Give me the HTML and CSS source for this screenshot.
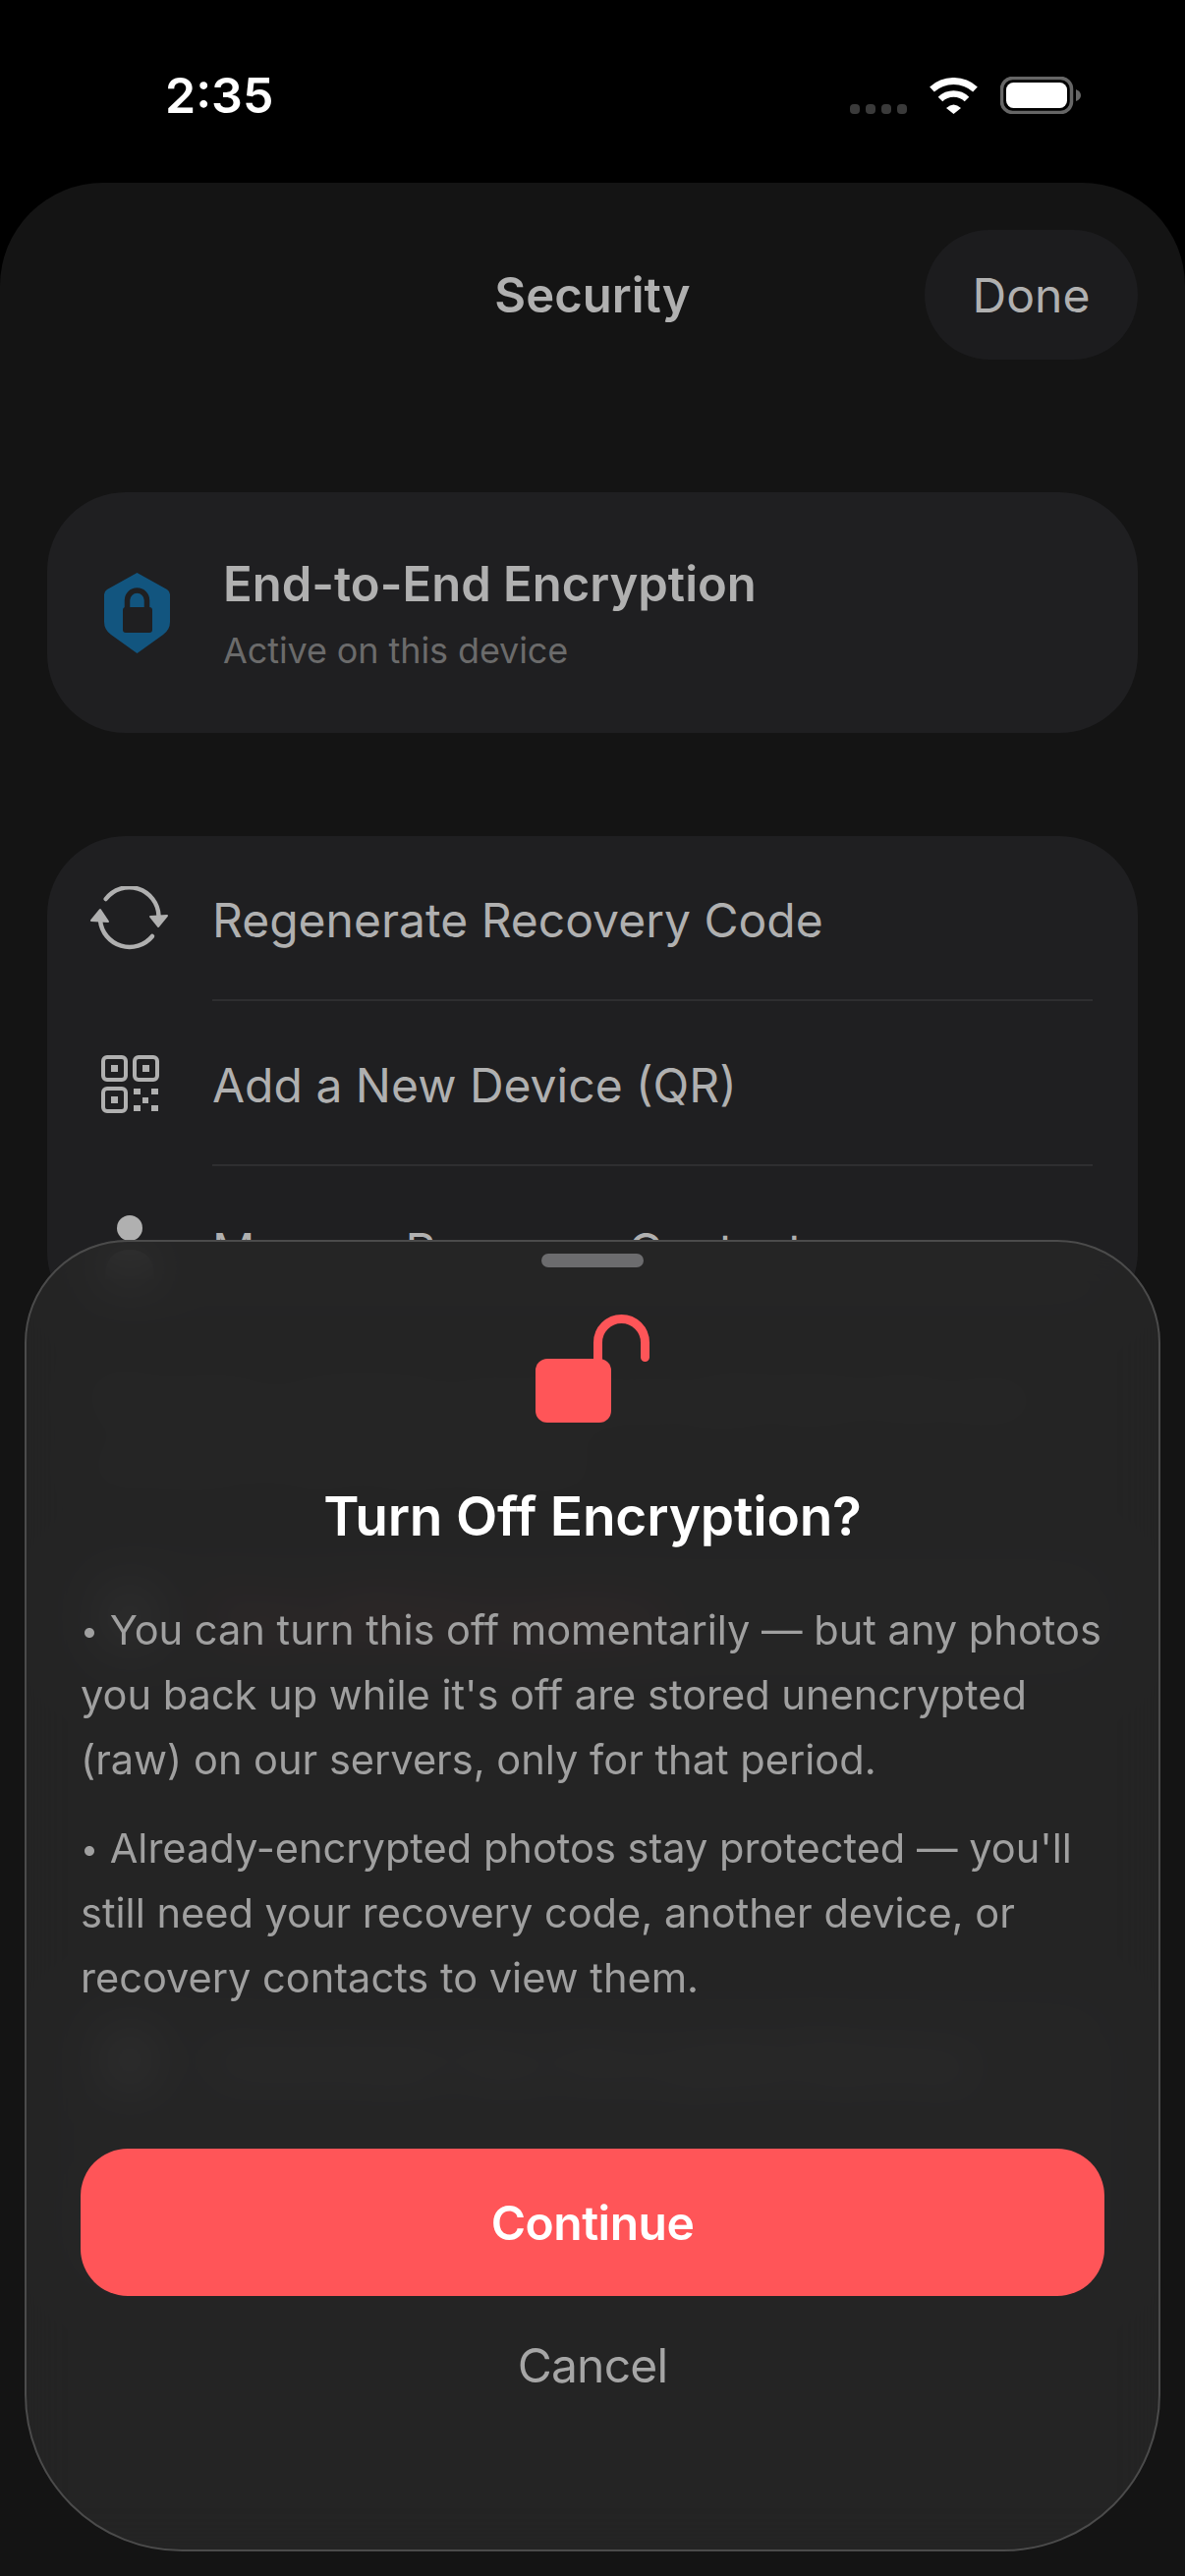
FILE: index.html
```html
<!DOCTYPE html>
<html>
<head>
	<meta charset="utf-8">
	<title>Security</title>
	<link rel="stylesheet" href="styles.css">
</head>
<body>
	<div class="status-bar">
		<span class="time">2:35</span>
		<div class="status-icons">
			<div class="signal"><i></i><i></i><i></i><i></i></div>
			<svg class="wifi" width="51" height="37" viewBox="0 0 51 37">
				<path d="M3.5 12 A32.7 32.7 0 0 1 47.5 12" fill="none" stroke="#fff" stroke-width="7"/>
				<path d="M12 22 A19.3 19.3 0 0 1 39 22" fill="none" stroke="#fff" stroke-width="6.5"/>
				<path d="M18 31 Q25.5 24 33 31 L25.5 37 Z" fill="#fff"/>
			</svg>
			<svg class="battery" width="82" height="38" viewBox="0 0 82 38">
				<rect x="1.5" y="1.5" width="71" height="35" rx="11" fill="none" stroke="#666" stroke-width="3.5"/>
				<rect x="6" y="6" width="62" height="26" rx="7.5" fill="#fff"/>
				<path d="M77 13 Q82 15 82 19 Q82 23 77 25 Z" fill="#666"/>
			</svg>
		</div>
	</div>

	<div class="screen">
		<div class="nav">
			<div class="nav-title">Security</div>
			<div class="done-btn">Done</div>
		</div>

		<div class="card status-card">
			<svg class="shield" width="67" height="82" viewBox="0 0 67 82">
				<path d="M33.5 0 L64 17 Q67 19 67 22 V50 Q67 58 60 63 L33.5 82 L7 63 Q0 58 0 50 V22 Q0 19 3 17 Z" fill="#12557f"/>
				<path d="M23.5 37 V28 A10 10 0 0 1 43.5 28 V37" fill="none" stroke="#1f1f21" stroke-width="5.5"/>
				<rect x="19" y="35" width="30" height="26" rx="3" fill="#1f1f21"/>
			</svg>
			<div>
				<div class="status-title">End-to-End Encryption</div>
				<div class="status-sub">Active on this device</div>
			</div>
		</div>

		<div class="card list-card">
			<div class="row">
				<div class="row-icon">
					<svg width="80" height="66" viewBox="0 0 80 66">
						<path d="M15.7 13 A30 30 0 0 1 69.5 30" fill="none" stroke="#b0b0b0" stroke-width="4.5" stroke-linecap="round"/>
						<path d="M10 35 A30 30 0 0 0 63 51" fill="none" stroke="#b0b0b0" stroke-width="4.5" stroke-linecap="round"/>
						<path d="M61 31 L78 30 L69 41 Z" fill="#b0b0b0" stroke="#b0b0b0" stroke-width="2" stroke-linejoin="round"/>
						<path d="M1 35 L18 36 L10 24 Z" fill="#b0b0b0" stroke="#b0b0b0" stroke-width="2" stroke-linejoin="round"/>
					</svg>
				</div>
				<div class="row-text">Regenerate Recovery Code</div>
			</div>
			<div class="row">
				<div class="row-icon">
					<svg width="59" height="59" viewBox="0 0 59 59" fill="#b0b0b0">
						<g fill="none" stroke="#b0b0b0" stroke-width="4">
							<rect x="2" y="2" width="23" height="23" rx="4"/>
							<rect x="34" y="2" width="23" height="23" rx="4"/>
							<rect x="2" y="34" width="23" height="23" rx="4"/>
						</g>
						<rect x="10" y="10" width="7" height="7"/>
						<rect x="42" y="10" width="7" height="7"/>
						<rect x="10" y="42" width="7" height="7"/>
						<rect x="33" y="34" width="7" height="6"/>
						<rect x="51" y="34" width="7" height="6"/>
						<rect x="42" y="43" width="6" height="6"/>
						<rect x="33" y="51" width="7" height="6"/>
						<rect x="51" y="51" width="7" height="6"/>
					</svg>
				</div>
				<div class="row-text">Add a New Device (QR)</div>
			</div>
			<div class="row">
				<div class="row-icon">
					<svg width="60" height="70" viewBox="0 0 60 70" fill="#b0b0b0">
						<circle cx="30" cy="14" r="13"/>
						<path d="M5 66 Q5 36 30 36 Q55 36 55 66 Z"/>
					</svg>
				</div>
				<div class="row-text row-text-cut">Manage Recovery Contacts</div>
			</div>
		</div>

		<div class="caption">Recovery contacts can help you get back into your account if you lose access.</div>

		<div class="card danger-card">
			<div class="row">
				<div class="row-icon"><div class="blob"></div></div>
				<div class="row-text danger-text">Turn Off Encryption</div>
			</div>
		</div>

		<div class="card lower-card">
			<div class="row">
				<div class="row-icon"><div class="blob"></div></div>
				<div class="row-text">Download Your Encrypted Backup</div>
			</div>
			<div class="row">
				<div class="row-icon"><div class="blob"></div></div>
			</div>
		</div>
	</div>

	<div class="sheet">
		<div class="handle"></div>
		<svg class="open-lock" width="117" height="110" viewBox="0 0 117 110">
			<path d="M63.5 48 V28.5 A24 24 0 0 1 111.5 28.5 V43.5" fill="none" stroke="#ff5558" stroke-width="9" stroke-linecap="round"/>
			<rect x="0" y="45" width="77" height="65" rx="12" fill="#ff5558"/>
		</svg>
		<div class="sheet-title">Turn Off Encryption?</div>
		<div class="sheet-body">
			<p><span class="dot">•</span> You can turn this off momentarily — but any photos you back up while it's off are stored unencrypted (raw) on our servers, only for that period.</p>
			<p><span class="dot">•</span> Already-encrypted photos stay protected — you'll still need your recovery code, another device, or recovery contacts to view them.</p>
		</div>
		<div class="continue-btn">Continue</div>
		<div class="cancel-btn">Cancel</div>
	</div>
</body>
</html>
```

FILE: styles.css
```css
html, body {
	margin: 0;
	padding: 0;
}

body {
	position: relative;
	width: 1206px;
	height: 2622px;
	overflow: hidden;
	background: #000;
	font-family: Inter, "Liberation Sans", sans-serif;
	color: #b0b0b0;
}

/* status bar */
.status-bar {
	height: 186px;
	display: flex;
	justify-content: space-between;
	align-items: flex-start;
	padding: 0 106px 0 168px;
	box-sizing: border-box;
}

.time {
	margin-top: 67px;
	font-size: 50px;
	line-height: 60px;
	font-weight: 600;
	color: #fff;
}

.status-icons {
	display: flex;
	align-items: flex-end;
	margin-top: 78px;
	height: 38px;
}

.signal {
	display: flex;
	gap: 6px;
	margin-right: 22px;
}

.signal i {
	width: 10px;
	height: 10px;
	border-radius: 4px;
	background: #3a3a3a;
}

.wifi {
	margin-right: 22px;
}

/* main screen */
.screen {
	height: 2436px;
	box-sizing: border-box;
	padding: 48px 48px 0;
	background: #141414;
	border-radius: 105px 105px 0 0;
	overflow: hidden;
}

.nav {
	height: 132px;
	display: flex;
	justify-content: flex-end;
	align-items: center;
}

.nav-title {
	flex: 1;
	padding-left: 217px;
	text-align: center;
	font-size: 49px;
	font-weight: 600;
}

.done-btn {
	width: 217px;
	height: 132px;
	border-radius: 66px;
	background: #1c1c1e;
	display: flex;
	align-items: center;
	justify-content: center;
	font-size: 48px;
}

.card {
	background: #1f1f21;
	border-radius: 80px;
}

.status-card {
	height: 245px;
	margin-top: 135px;
	display: flex;
	align-items: center;
	padding-left: 58px;
}

.shield {
	margin-right: 54px;
}

.status-title {
	margin-top: 2px;
	font-size: 49px;
	font-weight: 600;
	line-height: 60px;
}

.status-sub {
	margin-top: 15px;
	font-size: 36px;
	line-height: 44px;
	letter-spacing: -0.1px;
	color: #6b6b6b;
}

.list-card {
	margin-top: 105px;
	height: 503px;
}

.row {
	position: relative;
	height: 168px;
	display: flex;
	align-items: center;
}

.row + .row::before {
	content: "";
	position: absolute;
	top: -2px;
	left: 168px;
	right: 46px;
	height: 2px;
	background: #2e2e30;
}

.row-icon {
	width: 168px;
	box-sizing: border-box;
	display: flex;
	justify-content: center;
	flex-shrink: 0;
}

.row-text {
	font-size: 48px;
	padding-top: 2px;
}

/* only the tops of this row's letters show above the sheet */
.row-text-cut {
	clip-path: inset(0 0 39px 0);
}

.blob {
	width: 50px;
	height: 60px;
	background: #777;
}

.caption {
	margin: 36px 48px 0;
	font-size: 40px;
	line-height: 66px;
	color: #888;
}

.danger-card {
	margin-top: 40px;
}

.danger-text {
	font-weight: 700;
	color: #ff5558;
}

.lower-card {
	margin-top: 283px;
}

/* bottom sheet, sits over the screen */
.sheet {
	position: absolute;
	left: 25px;
	top: 1262px;
	width: 1156px;
	height: 1335px;
	box-sizing: border-box;
	padding: 0 55px;
	display: flex;
	flex-direction: column;
	align-items: center;
	background: rgba(38, 38, 38, 0.9);
	backdrop-filter: blur(24px);
	border: 2px solid #4b4b4b;
	border-radius: 105px 105px 160px 160px;
}

.handle {
	width: 104px;
	height: 14px;
	margin-top: 12px;
	border-radius: 7px;
	background: #6c6c6e;
}

.open-lock {
	margin-top: 48px;
	flex-shrink: 0;
}

.sheet-title {
	margin-top: 63px;
	font-size: 55px;
	line-height: 64px;
	letter-spacing: -0.2px;
	font-weight: 600;
	color: #fff;
}

.sheet-body {
	margin-top: 51px;
	font-size: 41.55px;
	line-height: 66px;
	color: #a0a0a0;
	width: 1056px;
	align-self: flex-start;
}

.sheet-body p {
	margin: 0 0 24px;
}

.dot {
	font-size: 32px;
	line-height: 0;
	vertical-align: 3px;
}

.continue-btn {
	flex-shrink: 0;
	width: 100%;
	height: 150px;
	margin-top: 117px;
	border-radius: 48px;
	background: #ff5558;
	display: flex;
	align-items: center;
	justify-content: center;
	font-size: 48px;
	letter-spacing: -0.5px;
	font-weight: 600;
	color: #fff;
}

.cancel-btn {
	margin-top: 41px;
	font-size: 48px;
	line-height: 60px;
	letter-spacing: -0.8px;
	color: #a6a6a6;
}
```
